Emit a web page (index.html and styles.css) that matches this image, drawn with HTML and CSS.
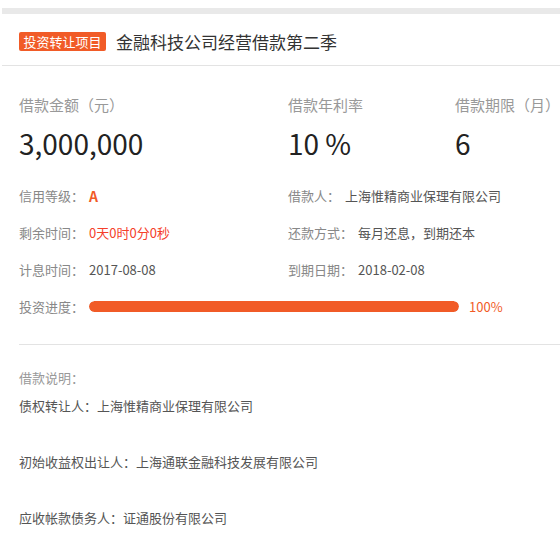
FILE: index.html
```html
<!DOCTYPE html>
<html lang="zh-CN">
<head>
<meta charset="utf-8">
<title>金融科技公司经营借款第二季</title>
<link rel="stylesheet" href="styles.css">
</head>
<body>
<div class="page">
  <div class="topbar"></div>
  <div class="header">
    <span class="badge">投资转让项目</span>
    <h1 class="title">金融科技公司经营借款第二季</h1>
  </div>
  <div class="stats">
    <div class="stat">
      <div class="stat-label">借款金额（元）</div>
      <div class="stat-value">3,000,000</div>
    </div>
    <div class="stat">
      <div class="stat-label">借款年利率</div>
      <div class="stat-value">10 %</div>
    </div>
    <div class="stat">
      <div class="stat-label">借款期限（月）</div>
      <div class="stat-value">6</div>
    </div>
  </div>
  <div class="info">
    <div class="row"><span class="label">信用等级：</span><span class="grade">A</span></div>
    <div class="row"><span class="label">借款人：</span><span class="value">上海惟精商业保理有限公司</span></div>
    <div class="row"><span class="label">剩余时间：</span><span class="countdown">0天0时0分0秒</span></div>
    <div class="row"><span class="label">还款方式：</span><span class="value">每月还息，到期还本</span></div>
    <div class="row"><span class="label">计息时间：</span><span class="value">2017-08-08</span></div>
    <div class="row"><span class="label">到期日期：</span><span class="value">2018-02-08</span></div>
    <div class="row progress-row">
      <span class="label">投资进度：</span>
      <div class="bar"><div class="bar-fill" style="width:100%"></div></div>
      <span class="percent">100%</span>
    </div>
  </div>
  <div class="divider"></div>
  <div class="desc">
    <div class="desc-title">借款说明：</div>
    <p class="desc-text">债权转让人：上海惟精商业保理有限公司<br><br>初始收益权出让人：上海通联金融科技发展有限公司<br><br>应收帐款债务人：证通股份有限公司</p>
  </div>
</div>
</body>
</html>
```

FILE: styles.css
```css
* { box-sizing: border-box; }
html, body { margin: 0; padding: 0; background: #fff; }
body {
  font-family: "Noto Sans CJK SC", "Noto Sans", sans-serif;
  color: #555;
}
.page { padding-left: 2px; width: 560px; }
.topbar { margin-top: 8px; height: 6px; background: #e9e9e9; }
.header {
  height: 52px;
  padding: 4px 0 0 17px;
  display: flex;
  align-items: center;
  gap: 10px;
  border-bottom: 1px solid #e3e3e3;
}
.badge {
  display: inline-block;
  height: 19px;
  line-height: 19px;
  padding: 0 4.5px;
  font-size: 13px;
  color: #fff;
  background: #f15b27;
  border-radius: 2px;
}
.title {
  margin: 0;
  font-size: 17px;
  font-weight: normal;
  color: #333;
}
.stats {
  display: grid;
  grid-template-columns: 269px 167px 1fr;
  padding: 29px 0 0 17px;
}
.stat-label { font-size: 15px; line-height: 20px; color: #999; }
.stat-value { margin-top: 10px; font-size: 28px; line-height: 36px; color: #222; }
.info {
  display: grid;
  grid-template-columns: 269px 1fr;
  grid-auto-rows: 37px;
  padding: 16px 0 0 17px;
  font-size: 13px;
}
.row { display: flex; align-items: center; }
.label { color: #888; margin-right: 5px; }
.value { color: #555; }
.grade { color: #f15b27; font-weight: bold; font-size: 14px; }
.countdown { color: #f5402a; }
.progress-row { grid-column: 1 / span 2; }
.bar {
  width: 370px;
  height: 11px;
  border-radius: 6px;
  background: #eee;
  overflow: hidden;
}
.bar-fill { height: 100%; background: #f15b27; border-radius: 6px; }
.percent { margin-left: 10px; color: #f15b27; font-size: 13px; }
.divider { margin: 19px 0 0 17px; height: 1px; background: #e3e3e3; }
.desc { padding: 19px 0 0 17px; font-size: 13px; line-height: 28px; }
.desc-title { color: #999; }
.desc-text { margin: 0; color: #555; }
```
